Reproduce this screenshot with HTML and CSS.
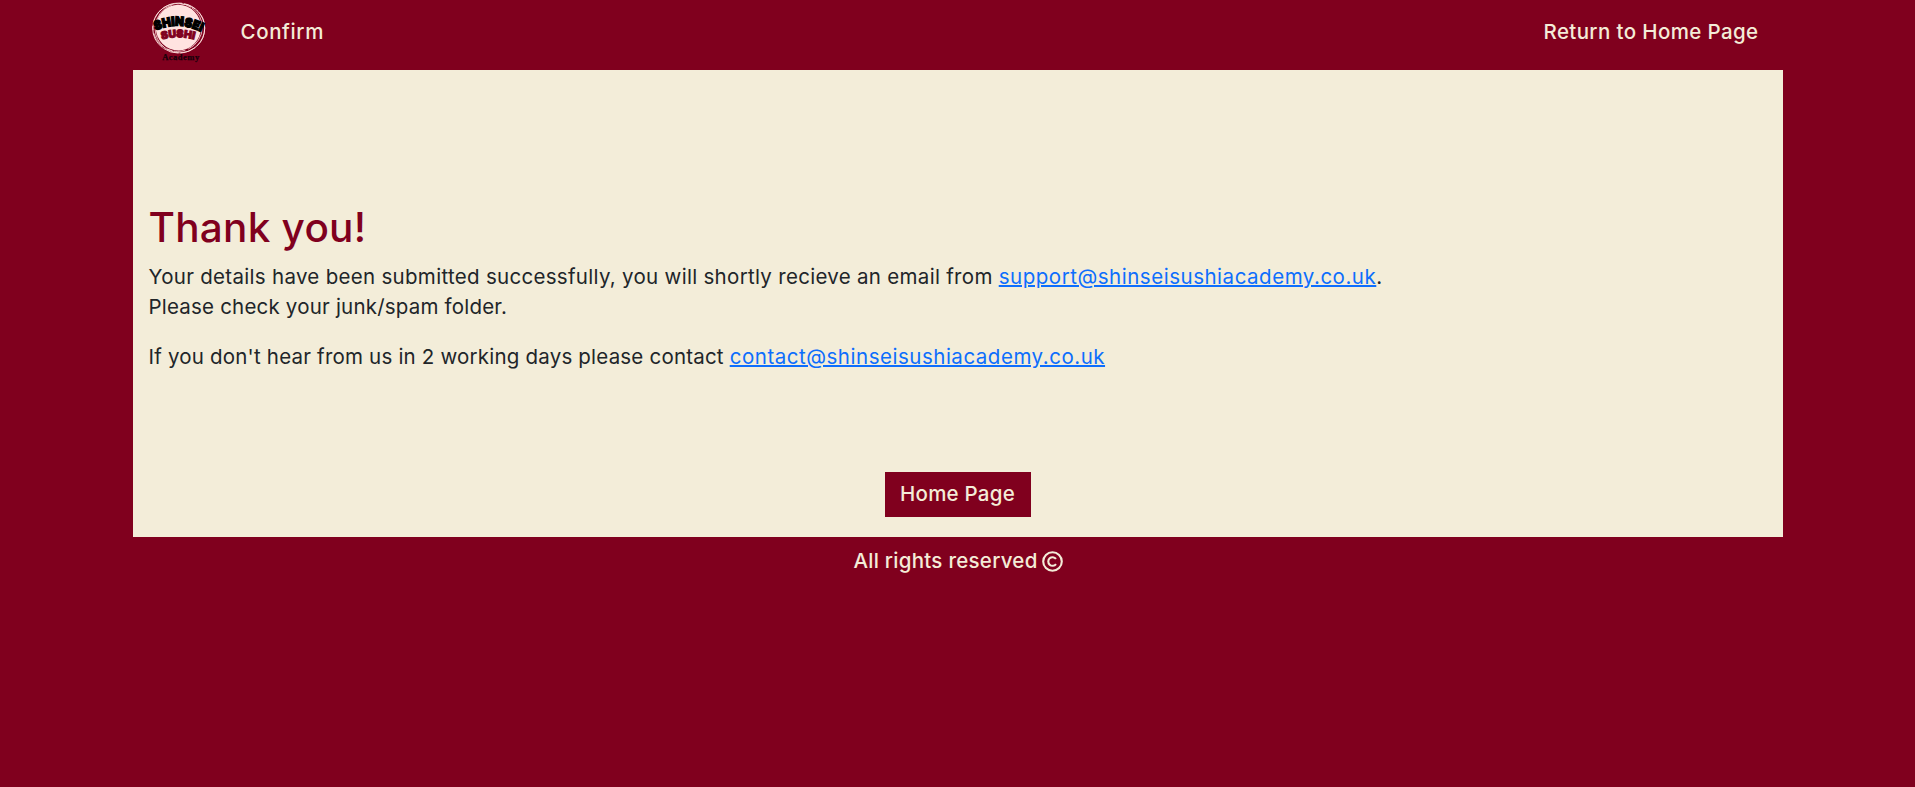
FILE: index.html
```html
<!DOCTYPE html>
<html lang="en">
<head>
<meta charset="utf-8">
<title>Confirm</title>
<link rel="stylesheet" href="styles.css">
</head>
<body>
<div class="container">
  <nav class="navbar">
    <a class="brand" href="#" aria-label="Shinsei Sushi Academy">
      <svg class="logo" viewBox="0.8 -0.6 66 66">
        <g fill="none" stroke="#ffe3e0">
          <ellipse cx="33.5" cy="28.5" rx="26" ry="25" stroke-width=".9" stroke-dasharray="38 2 16 1 25 3"/>
          <ellipse cx="34.7" cy="28.6" rx="24.8" ry="24.6" stroke-width=".8" stroke-dasharray="20 2 30 4"/>
          <ellipse cx="32.4" cy="27.8" rx="24.6" ry="24" stroke-width=".8" stroke-dasharray="27 3 12 1"/>
        </g>
        <ellipse cx="33.2" cy="28" rx="22.6" ry="22.8" fill="#ffe3e0"/>
        <path id="arc1" d="M10.5 31Q33 20.5 57 33" fill="none"/>
        <path id="arc2" d="M16.5 40Q33 35.5 49.5 40" fill="none"/>
        <text class="logo-name"><textPath href="#arc1" textLength="47" lengthAdjust="spacingAndGlyphs">SHINSEI</textPath></text>
        <text class="logo-sushi"><textPath href="#arc2" textLength="33" lengthAdjust="spacingAndGlyphs">SUSHI</textPath></text>
        <text class="logo-sub" x="17" y="60" textLength="37">Academy</text>
      </svg>
    </a>
    <a class="nav-link confirm" href="#">Confirm</a>
    <a class="nav-link return" href="#">Return to Home Page</a>
  </nav>
  <main class="content">
    <h1>Thank you!</h1>
    <p><span class="intro">Your details have been submitted successfully, you will shortly recieve an email from </span><a href="#">support@shinseisushiacademy.co.uk</a>.<br>Please check your junk/spam folder.</p>
    <p>If you don't hear from us in 2 working days please contact <a href="#">contact@shinseisushiacademy.co.uk</a></p>
    <div class="actions"><a class="button" href="#">Home Page</a></div>
  </main>
  <footer class="footer"><span>All rights reserved</span>
    <svg class="copyright" viewBox="0 0 21 21" fill="none" stroke="currentColor" stroke-width="2.1"><circle cx="10.5" cy="10.5" r="9.3"/><path d="M14 7.9A4.3 4.3 0 1 0 14 13.1"/></svg>
  </footer>
</div>
</body>
</html>
```
FILE: styles.css
```css
* { box-sizing: border-box; }
body { margin: 0; background: #80001e; color: #212529; font: 20.5px/30px Inter, sans-serif; }
.container { width: 1650px; margin: 0 auto; }
.navbar { display: flex; align-items: center; height: 70px; padding: 0 24px 6px 13px; }
.brand { display: flex; }
.logo { width: 66px; height: 66px; }
.nav-link { color: #f4ecd8; font-weight: 500; text-decoration: none; }
.confirm { margin-left: 29px; letter-spacing: .62px; }
.return { margin-left: auto; letter-spacing: .38px; }
.logo-name { font: 900 12.5px "Inter", sans-serif; stroke: #000; stroke-width: 1.3; }
.logo-sushi { font: 900 10.5px "Inter", sans-serif; fill: #80001e; stroke: #80001e; stroke-width: 1; }
.logo-sub { font: 700 8.5px "Liberation Serif", serif; fill: #16000a; stroke: #16000a; stroke-width: .25; }
.content { height: 467px; padding: 134px 16px 0; background: #f3edd9; }
h1 { margin: 0 0 10px; font-size: 40.5px; font-weight: 500; line-height: 48px; letter-spacing: .25px; color: #80001e; }
p { margin: 0 0 20px; letter-spacing: .2px; }
.intro { letter-spacing: .3px; }
p a { color: #0d6efd; letter-spacing: .52px; text-decoration-thickness: 2px; }
.actions { display: flex; justify-content: center; margin-top: 100px; }
.button { display: flex; justify-content: center; width: 146px; padding: 7px 0 8px; background: #80001e; color: #f4ecd8; font-weight: 500; letter-spacing: .24px; text-decoration: none; }
.footer { display: flex; justify-content: center; align-items: center; gap: 4px; padding: 9px 0 0 1px; color: #f4ecd8; font-weight: 500; letter-spacing: .27px; }
.copyright { width: 21px; height: 21px; }
```
